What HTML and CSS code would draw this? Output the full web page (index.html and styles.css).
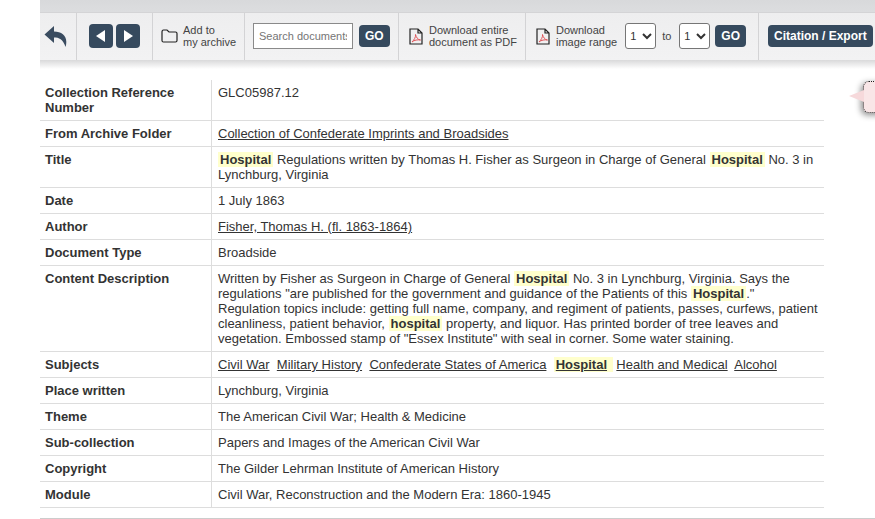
FILE: index.html
```html
<!DOCTYPE html>
<html lang="en">
<head>
<meta charset="utf-8">
<title>Document</title>
<link rel="stylesheet" href="styles.css">
</head>
<body>
<div class="page">
  <div class="topstrip"></div>
  <div class="toolbar">
    <div class="cell cell-back">
      <svg class="back" width="24" height="24" viewBox="0 0 24 24"><path d="M10 2 L0.5 10.500 L10 19 V13.500 C15 13.500 19 15 21.500 23 C24.500 13 19 7.500 10 7.500 Z" fill="#3a4c60"/></svg>
    </div>
    <div class="cell cell-nav">
      <span class="navbtn"><svg width="12" height="14" viewBox="0 0 12 14"><path d="M10 1 V13 L1 7 Z" fill="#fff"/></svg></span>
      <span class="navbtn"><svg width="12" height="14" viewBox="0 0 12 14"><path d="M2 1 V13 L11 7 Z" fill="#fff"/></svg></span>
    </div>
    <div class="cell cell-archive">
      <svg class="icon" width="17" height="14" viewBox="0 0 17 14"><path d="M1 3 Q1 1 2.500 1 H6 L8 3 H14.500 Q16 3 16 4.500 V11.500 Q16 13 14.500 13 H2.500 Q1 13 1 11.500 Z" fill="none" stroke="#222" stroke-width="1.200"/></svg>
      <span class="tooltext">Add to<br>my archive</span>
    </div>
    <div class="cell cell-search">
      <input class="search" type="text" placeholder="Search documents">
      <span class="btn">GO</span>
    </div>
    <div class="cell cell-pdf">
      <svg class="icon" width="14" height="17" viewBox="0 0 14 17"><path d="M1 1 H9 L13 5 V16 H1 Z M9 1 V5 H13" fill="none" stroke="#222" stroke-width="1.200"/><path d="M3 14 C5 12 7 9 6.500 6.500 C7 9 9 12 11.500 12 C9 11.500 5 12 3 14 Z" fill="none" stroke="#e0555a" stroke-width="1"/></svg>
      <span class="tooltext">Download entire<br>document as PDF</span>
    </div>
    <div class="cell cell-range">
      <svg class="icon" width="14" height="17" viewBox="0 0 14 17"><path d="M1 1 H9 L13 5 V16 H1 Z M9 1 V5 H13" fill="none" stroke="#222" stroke-width="1.200"/><path d="M3 14 C5 12 7 9 6.500 6.500 C7 9 9 12 11.500 12 C9 11.500 5 12 3 14 Z" fill="none" stroke="#e0555a" stroke-width="1"/></svg>
      <span class="tooltext">Download<br>image range</span>
      <select class="pick pick-first"><option>1</option></select>
      <span class="to">to</span>
      <select class="pick"><option>1</option></select>
      <span class="btn">GO</span>
    </div>
    <div class="cell cell-cite">
      <span class="btn">Citation / Export</span>
    </div>
  </div>
  <div class="shadow"></div>

  <div class="bubble"></div>

  <table class="meta">
    <tr><th>Collection Reference Number</th><td>GLC05987.12</td></tr>
    <tr><th>From Archive Folder</th><td><a href="#">Collection of Confederate Imprints and Broadsides</a></td></tr>
    <tr><th>Title</th><td><mark>Hospital</mark> Regulations written by Thomas H. Fisher as Surgeon in Charge of General <mark>Hospital</mark> No. 3 in Lynchburg, Virginia</td></tr>
    <tr><th>Date</th><td>1 July 1863</td></tr>
    <tr><th>Author</th><td><a href="#">Fisher, Thomas H. (fl. 1863-1864)</a></td></tr>
    <tr><th>Document Type</th><td>Broadside</td></tr>
    <tr><th>Content Description</th><td>Written by Fisher as Surgeon in Charge of General <mark>Hospital</mark> No. 3 in Lynchburg, Virginia. Says the regulations "are published for the government and guidance of the Patients of this <mark>Hospital</mark>." Regulation topics include: getting full name, company, and regiment of patients, passes, curfews, patient cleanliness, patient behavior, <mark>hospital</mark> property, and liquor. Has printed border of tree leaves and vegetation. Embossed stamp of "Essex Institute" with seal in corner. Some water staining.</td></tr>
    <tr><th>Subjects</th><td class="subjects"><a href="#">Civil War</a> <a href="#">Military History</a> <a href="#">Confederate States of America</a> <mark><a href="#">Hospital</a></mark> <a href="#">Health and Medical</a> <a href="#">Alcohol</a></td></tr>
    <tr><th>Place written</th><td>Lynchburg, Virginia</td></tr>
    <tr><th>Theme</th><td>The American Civil War; Health &amp; Medicine</td></tr>
    <tr><th>Sub-collection</th><td>Papers and Images of the American Civil War</td></tr>
    <tr><th>Copyright</th><td>The Gilder Lehrman Institute of American History</td></tr>
    <tr><th>Module</th><td>Civil War, Reconstruction and the Modern Era: 1860-1945</td></tr>
  </table>
  <div class="endrule"></div>
</div>
</body>
</html>
```

FILE: styles.css
```css
html, body {
  margin: 0;
  padding: 0;
  background: #fff;
  overflow: hidden;
}
body {
  width: 875px;
  height: 519px;
  font-family: "Liberation Sans", Arial, sans-serif;
  font-size: 13px;
  line-height: 15px;
  color: #333;
}
.page {
  position: relative;
  margin-left: 40px;
  width: 835px;
  height: 519px;
  overflow: hidden;
}
.topstrip {
  height: 12px;
  background: linear-gradient(#d8d9db, #dcdddf);
}
.toolbar {
  display: flex;
  align-items: stretch;
  height: 48px;
  padding-bottom: 1px;
  background: linear-gradient(#eeeeef, #f2f2f3);
  border-top: 1px solid #d4d4d6;
  box-sizing: border-box;
}
.shadow {
  height: 9px;
  background: linear-gradient(#d9d9da, #ffffff);
}
.cell {
  display: flex;
  flex: none;
  align-items: center;
  box-sizing: border-box;
  border-right: 1px solid #d3d3d5;
  margin-bottom: -1px;
  padding-bottom: 1px;
}
.icon { flex: none; }
.cell-back { width: 37px; padding-left: 4px; }
.cell-back .back { display: block; }
.cell-nav { width: 76px; padding-left: 12px; gap: 3px; }
.navbtn {
  display: flex;
  align-items: center;
  justify-content: center;
  width: 24px;
  height: 24px;
  background: #364a5e;
  border-radius: 4px;
}
.cell-archive { width: 92px; padding-left: 8px; gap: 5px; }
.tooltext {
  font-size: 11px;
  line-height: 12px;
  color: #444;
  white-space: nowrap;
}
.cell-search { width: 154px; padding-left: 8px; gap: 6px; }
.search {
  box-sizing: border-box;
  flex: none;
  width: 100px;
  height: 26px;
  padding: 0 5px;
  border: 1px solid #8a8a8a;
  background: #fff;
  font-family: "Liberation Sans", Arial, sans-serif;
  font-size: 11px;
  color: #555;
}
.search::placeholder { color: #757575; opacity: 1; }
.btn {
  display: inline-block;
  flex: none;
  box-sizing: border-box;
  height: 22px;
  padding: 0 6px;
  background: #364a5e;
  border-radius: 4px;
  color: #fff;
  font-weight: bold;
  font-size: 12px;
  line-height: 22px;
  white-space: nowrap;
}
.cell-pdf { width: 127px; padding-left: 10px; gap: 6px; }
.cell-range { width: 233px; padding-left: 10px; gap: 6px; }
.cell-range .btn { margin-left: -1px; }
.pick {
  box-sizing: border-box;
  flex: none;
  width: 31px;
  height: 26px;
  padding: 0;
  border: 1px solid #767676;
  border-radius: 3px;
  background: #fff;
  font-family: "Liberation Sans", Arial, sans-serif;
  font-size: 11px;
  color: #333;
}
.pick-first { margin-left: 2px; }
.to { font-size: 11px; color: #444; margin: 0 2px 0 0; }
.cell-cite { border-right: 0; padding-left: 9px; }
.bubble {
  position: absolute;
  left: 823px;
  top: 81px;
  width: 30px;
  height: 32px;
  box-sizing: border-box;
  background: #f9e6e7;
  border: 1px dotted #222;
  border-radius: 6px;
  box-shadow: -2px 2px 6px rgba(0, 0, 0, 0.45);
}
.bubble::before {
  content: "";
  position: absolute;
  left: -15px;
  top: 8px;
  border-style: solid;
  border-width: 6px 15px 6px 0;
  border-color: transparent #f6d9db transparent transparent;
}
.meta {
  width: 784px;
  margin-top: 11px;
  border-collapse: collapse;
  table-layout: fixed;
}
.meta th, .meta td {
  padding: 5px 5px 5px 6px;
  border-bottom: 1px solid #ddd;
  vertical-align: top;
  font-size: 13px;
  line-height: 15px;
  text-align: left;
}
.meta th {
  width: 156px;
  padding-left: 5px;
  padding-right: 10px;
  font-weight: bold;
  border-right: 1px solid #ddd;
}
.meta a {
  color: #333;
  text-decoration: underline;
}
.meta mark {
  background: #ffffcc;
  color: #333;
  font-weight: bold;
  padding: 0 2px;
}
.subjects a { margin-right: 3.7px; }
.endrule {
  height: 1px;
  margin-top: 10px;
  background: #ccc;
}
```
